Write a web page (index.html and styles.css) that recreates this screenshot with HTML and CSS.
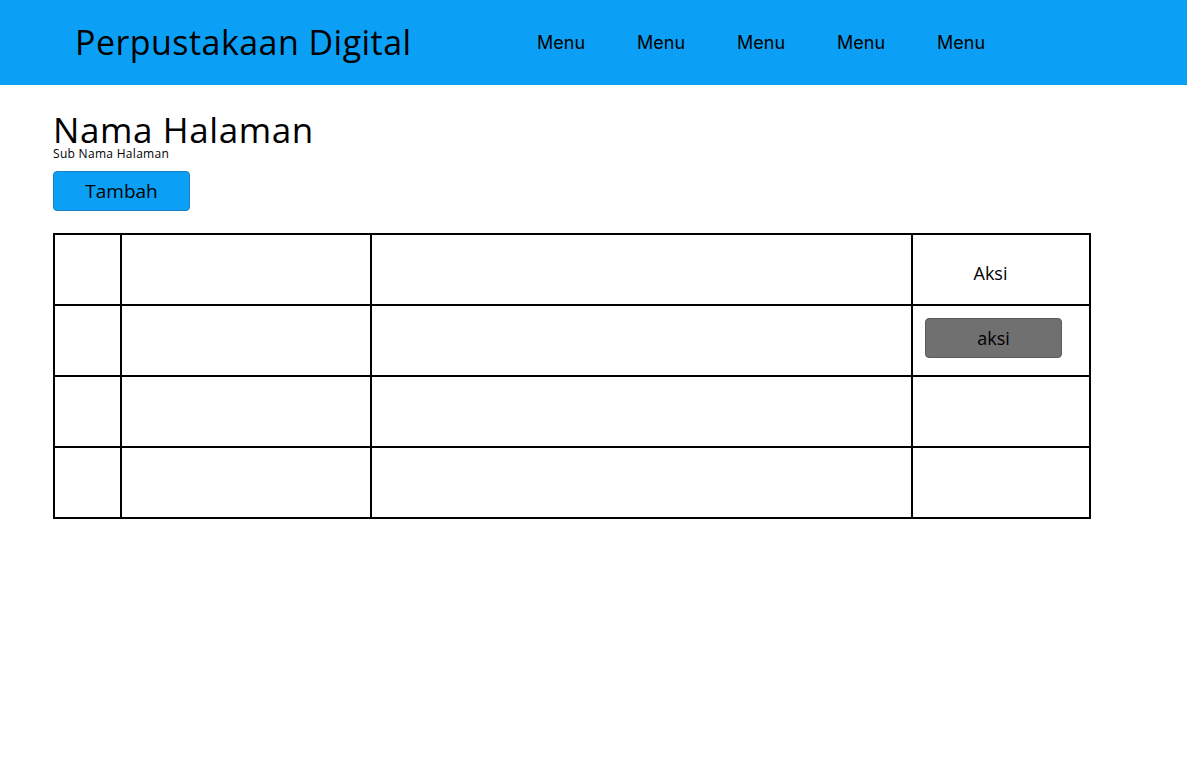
FILE: index.html
```html
<!DOCTYPE html>
<html lang="id">
<head>
<meta charset="utf-8">
<title>Perpustakaan Digital</title>
<link rel="stylesheet" href="styles.css">
</head>
<body>
<header class="topbar">
  <div class="brand">Perpustakaan Digital</div>
  <nav class="nav">
    <a class="nav-item" href="#">Menu</a>
    <a class="nav-item" href="#">Menu</a>
    <a class="nav-item" href="#">Menu</a>
    <a class="nav-item" href="#">Menu</a>
    <a class="nav-item" href="#">Menu</a>
  </nav>
</header>
<main class="content">
  <h1 class="page-title">Nama Halaman</h1>
  <div class="page-sub">Sub Nama Halaman</div>
  <button class="btn btn-primary">Tambah</button>
  <table class="grid">
    <colgroup>
      <col class="c1"><col class="c2"><col class="c3"><col class="c4">
    </colgroup>
    <tr><td></td><td></td><td></td><td class="act"><div class="act-label">Aksi</div></td></tr>
    <tr><td></td><td></td><td></td><td class="act"><button class="btn btn-gray">aksi</button></td></tr>
    <tr><td></td><td></td><td></td><td class="act"></td></tr>
    <tr><td></td><td></td><td></td><td class="act"></td></tr>
  </table>
</main>
</body>
</html>
```
FILE: styles.css
```css
* { box-sizing: border-box; }
html, body { margin: 0; padding: 0; background: #fff; }
body { font-family: "Open Sans", "Liberation Sans", sans-serif; color: #000; }

.topbar {
  height: 85px;
  background: #0ba0f5;
  display: flex;
  align-items: center;
  padding-left: 75px;
}
.brand {
  font-size: 34px;
  font-weight: 400;
  width: 462px;
  letter-spacing: 0.45px;
  margin-top: -2px;
}
.nav { display: flex; }
.nav-item {
  width: 100px;
  font-family: Inter, "Open Sans", sans-serif;
  font-size: 18px;
  color: #000;
  text-decoration: none;
}

.content { padding: 28px 53px 0 53px; }
.page-title {
  margin: 0;
  font-size: 35px;
  font-weight: 400;
  line-height: 34px;
  letter-spacing: 0.6px;
}
.page-sub {
  font-size: 12px;
  line-height: 14px;
  letter-spacing: 0.3px;
  margin-top: 0;
}
.btn {
  font-family: "Open Sans", sans-serif;
  font-size: 19px;
  width: 137px;
  height: 40px;
  border-radius: 4px;
  color: #000;
  padding: 0;
  cursor: pointer;
}
.btn-primary {
  margin-top: 10px;
  background: #0ba0f5;
  border: 1px solid #1a7fc4;
}
.btn-gray {
  background: #707070;
  border: 1px solid #5a5a5a;
  display: block;
  font-size: 18px;
  margin-top: -6px;
}

.grid {
  margin-top: 22px;
  border-collapse: collapse;
  width: 1036px;
  table-layout: fixed;
}
.grid td {
  border: 2px solid #000;
  height: 71px;
  padding: 0;
}
.c1 { width: 67px; }
.c2 { width: 250px; }
.c3 { width: 541px; }
.c4 { width: 178px; }
.grid td.act { padding: 0 12px; }
.act-label {
  width: 137px;
  text-align: center;
  font-size: 18px;
  margin-top: 6px;
  margin-left: -3px;
}
```
